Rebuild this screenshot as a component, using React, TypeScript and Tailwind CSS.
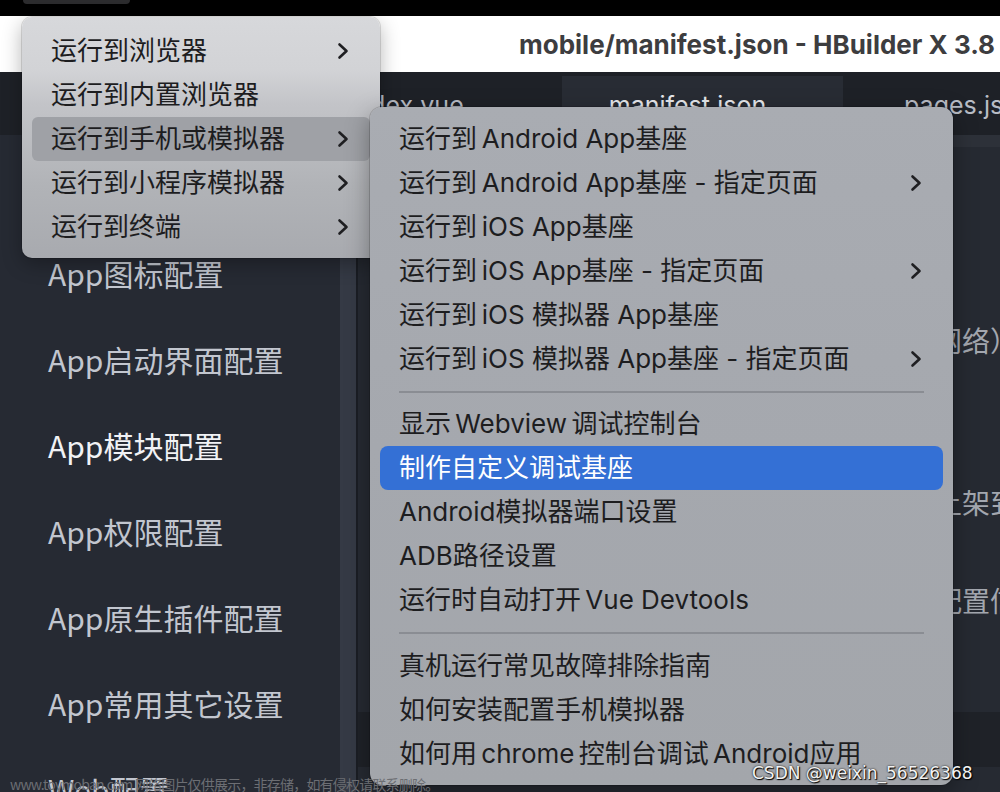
import React from 'react';

const Chevron = ({ color = '#1f1f22' }: { color?: string }) => (
  <svg width="12" height="18" viewBox="0 0 12 18" fill="none">
    <path d="M2.5 2.5 L9.5 9 L2.5 15.5" stroke={color} strokeWidth="2.6" strokeLinecap="round" strokeLinejoin="round" />
  </svg>
);

const Tab = ({ name, active }: { name: string; active?: boolean }) => (
  <div
    className={`w-[281px] h-[59px] shrink-0 flex items-center justify-center pr-[30px] text-[25px] [font-family:Inter,'Noto_Sans_CJK_SC',sans-serif] ${
      active ? 'bg-[#282c34] text-[#e6e8ec]' : 'text-[#b8bcc5]'
    }`}
  >
    {name}
  </div>
);

const sideItems = ['基础配置', 'App图标配置', 'App启动界面配置', 'App模块配置', 'App权限配置', 'App原生插件配置', 'App常用其它设置', 'Web配置'];

const mainItems = [
  { label: '运行到浏览器', sub: true },
  { label: '运行到内置浏览器' },
  { label: '运行到手机或模拟器', sub: true, hover: true },
  { label: '运行到小程序模拟器', sub: true },
  { label: '运行到终端', sub: true },
];

type Item = { label: string; sub?: boolean; active?: boolean } | 'sep1' | 'sep2';

const subItems: Item[] = [
  { label: '运行到\u2009Android App基座' },
  { label: '运行到\u2009Android App基座 - 指定页面', sub: true },
  { label: '运行到\u2009iOS App基座' },
  { label: '运行到\u2009iOS App基座 - 指定页面', sub: true },
  { label: '运行到\u2009iOS 模拟器 App基座' },
  { label: '运行到\u2009iOS 模拟器 App基座 - 指定页面', sub: true },
  'sep1',
  { label: '显示\u2006Webview\u2006调试控制台' },
  { label: '制作自定义调试基座', active: true },
  { label: 'Android模拟器端口设置' },
  { label: 'ADB路径设置' },
  { label: '运行时自动打开\u2006Vue Devtools' },
  'sep2',
  { label: '真机运行常见故障排除指南' },
  { label: '如何安装配置手机模拟器' },
  { label: '如何用\u2006chrome\u2006控制台调试\u2006Android应用' },
];

export default function App() {
  return (
    <div className="relative w-[1000px] h-[792px] overflow-hidden bg-[#262a32]">
      {/* black strip */}
      <div className="h-[16px] bg-black pl-[23px]">
        <div className="w-[107px] h-[4px] rounded-b-[4px] bg-[#2c2c2e]" />
      </div>

      {/* window title */}
      <div className="h-[56px] bg-white flex items-center pl-[519px] overflow-hidden whitespace-nowrap">
        <span className="text-[26px] font-bold text-[#3d3d3f] [font-family:Inter,sans-serif]">
          mobile/manifest.json - HBuilder X 3.8
        </span>
      </div>

      {/* tabs */}
      <div className="h-[63px] bg-[#1e2127] flex items-end overflow-hidden whitespace-nowrap">
        <div className="w-[281px] h-[59px] shrink-0" />
        <Tab name="index.vue" />
        <Tab name="manifest.json" active />
        <Tab name="pages.json" />
      </div>

      {/* body */}
      <div className="flex h-[657px]">
        <div className="w-[340px] pt-[9px] bg-[#262a33] [font-family:'Noto_Sans_CJK_SC',sans-serif]">
          {sideItems.map((s) => (
            <div
              key={s}
              className={`h-[86px] flex items-center pl-[48px] text-[30px] leading-none ${
                s === 'App模块配置' ? 'text-[#f1f2f5]' : 'text-[#c2c6cf]'
              }`}
            >
              {s}
            </div>
          ))}
        </div>
        <div className="w-[16px] bg-[#353a45]" />
        <div className="w-[2px] bg-[#1b1e24]" />
        <div className="flex-1 flex flex-col overflow-hidden">
          <div className="h-[12px] bg-[#2d3139]" />
          <div className="flex-1 pl-[72px] pt-[173px] whitespace-nowrap text-[28px] leading-[40px] text-[#a3a7af] [font-family:'Noto_Sans_CJK_SC',sans-serif]">
            <div>请勾选需要的模块，打包时将包含（需联网络）</div>
            <div className="mt-[122px]">注意：使用受限模块的应用可能无法正常上架到应用市场</div>
            <div className="mt-[58px]">如需使用第三方服务，请在对应模块填写配置信息</div>
          </div>
          <div className="h-[55px] bg-[#1f2228]" />
          <div className="h-[25px]" />
        </div>
      </div>

      {/* main context menu */}
      <div className="absolute left-[22px] top-[17px] w-[358px] h-[241px] rounded-[10px] pt-[12px] px-[10px] bg-[linear-gradient(180deg,#d7d8db_0%,#d2d3d6_22%,#c3c4c8_36%,#b1b3b7_70%,#a8aaaf_100%)] shadow-[0_6px_20px_rgba(0,0,0,0.3),0_0_0_1px_rgba(0,0,0,0.12)] [font-family:Inter,'Noto_Sans_CJK_SC',sans-serif]">
        {mainItems.map((it) => (
          <div
            key={it.label}
            className={`h-[44px] flex items-center justify-between pl-[19px] pr-[21px] rounded-[6px] text-[26px] leading-none text-[#1d1d1f] ${
              it.hover ? 'bg-[#9fa1a6]' : ''
            }`}
          >
            <span>{it.label}</span>
            {it.sub && <Chevron />}
          </div>
        ))}
      </div>

      {/* submenu */}
      <div className="absolute left-[370px] top-[107px] w-[583px] h-[678px] rounded-[12px] pt-[10px] px-[10px] bg-[linear-gradient(180deg,#a9acb2_0%,#a5a8ae_50%,#a3a6ab_100%)] shadow-[0_8px_24px_rgba(0,0,0,0.35),0_0_0_1px_rgba(0,0,0,0.15)] [font-family:Inter,'Noto_Sans_CJK_SC',sans-serif]">
        {subItems.map((it, i) => {
          if (it === 'sep1' || it === 'sep2') {
            return (
              <div key={i} className={`${it === 'sep1' ? 'h-[21px]' : 'h-[22px]'} flex items-center px-[19px]`}>
                <div className="h-[2px] w-full bg-[#8a8d93]" />
              </div>
            );
          }
          return (
            <div
              key={i}
              className={`h-[44px] flex items-center justify-between pl-[19px] pr-[21px] rounded-[8px] text-[26px] leading-none whitespace-nowrap ${
                it.active ? 'bg-[#3470d5] text-white' : 'text-[#1d1d1f]'
              }`}
            >
              <span>{it.label}</span>
              {it.sub && <Chevron />}
            </div>
          );
        })}
      </div>

      {/* watermarks */}
      <div className="absolute left-[10px] top-[774px] text-[14px] leading-[20px] tracking-[-0.8px] text-[#6c6e73] whitespace-nowrap [font-family:'Noto_Sans_CJK_SC',sans-serif]">
        www.toymoban.com 网络图片仅供展示，非存储，如有侵权请联系删除。
      </div>
      <div className="absolute left-[752px] top-[762px] text-[17px] leading-[22px] text-[#f2f2f2] whitespace-nowrap [font-family:'DejaVu_Sans',sans-serif] [text-shadow:0_0_2px_#000,1px_1px_1px_#000]">
        CSDN @weixin_56526368
      </div>
    </div>
  );
}
